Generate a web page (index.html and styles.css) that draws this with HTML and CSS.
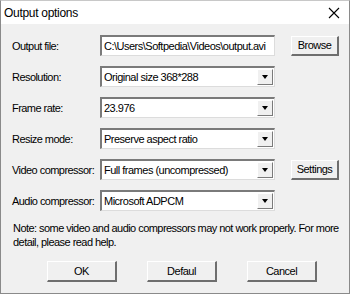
FILE: index.html
```html
<!DOCTYPE html>
<html lang="en">
<head>
    <meta charset="UTF-8">
    <title>Output options</title>
    <link rel="stylesheet" href="styles.css">
</head>
<body>

<div class="window">
    <div class="titlebar">
        <span class="title">Output options</span>
        <svg class="close" width="12" height="12" viewBox="0 0 12 12">
            <path d="M1 1 L11 11 M11 1 L1 11" stroke="#000" stroke-width="1.1" fill="none"/>
        </svg>
    </div>

    <div class="content">
        <div class="form-grid">
            <div class="label">Output file:</div>
            <div class="textbox">C:\Users\Softpedia\Videos\output.avi</div>
            <div class="btn side-btn">Browse</div>

            <div class="label">Resolution:</div>
            <div class="combo"><span class="value">Original size 368*288</span><span class="arrow"></span></div>
            <div></div>

            <div class="label">Frame rate:</div>
            <div class="combo"><span class="value">23.976</span><span class="arrow"></span></div>
            <div></div>

            <div class="label">Resize mode:</div>
            <div class="combo"><span class="value">Preserve aspect ratio</span><span class="arrow"></span></div>
            <div></div>

            <div class="label">Video compressor:</div>
            <div class="combo"><span class="value">Full frames (uncompressed)</span><span class="arrow"></span></div>
            <div class="btn side-btn">Settings</div>

            <div class="label">Audio compressor:</div>
            <div class="combo"><span class="value">Microsoft ADPCM</span><span class="arrow"></span></div>
            <div></div>
        </div>

        <p class="note">Note: some video and audio compressors may not work properly. For more detail, please read help.</p>

        <div class="actions">
            <div class="btn action-btn">OK</div>
            <div class="btn action-btn">Defaul</div>
            <div class="btn action-btn">Cancel</div>
        </div>
    </div>
</div>

</body>
</html>
```

FILE: styles.css
```css
body {
    margin: 0;
    background: #f0f0f0;
    font-family: "Liberation Sans", Arial, sans-serif;
    font-size: 11px;
    color: #000;
}
.window {
    width: 350px;
    height: 294px;
    box-sizing: border-box;
    border: 1px solid #8a8a8a;
    border-top-color: #c8c8c8;
    background: #f0f0f0;
    display: flex;
    flex-direction: column;
}
.titlebar {
    height: 23px;
    background: #fff;
    display: flex;
    align-items: center;
    justify-content: space-between;
    padding: 0 9px 0 3px;
    flex-shrink: 0;
}
.title {
    font-size: 12px;
    letter-spacing: -0.3px;
}
.content {
    padding: 11px 0 0 11px;
}
.form-grid {
    display: grid;
    grid-template-columns: 88px 175px 48px;
    grid-auto-rows: 21px;
    row-gap: 10px;
    column-gap: 0;
    align-items: center;
}
.label {
    letter-spacing: -0.55px;
}
.textbox, .combo {
    height: 21px;
    box-sizing: border-box;
    background: #fff;
    border-top: 2px solid #7a7a7a;
    border-left: 2px solid #7a7a7a;
    border-right: 1px solid #dcdcdc;
    border-bottom: 1px solid #dcdcdc;
    display: flex;
    align-items: center;
    white-space: nowrap;
    overflow: hidden;
    letter-spacing: -0.5px;
}
.textbox {
    padding-left: 2px;
}
.combo .value {
    flex: 1;
    padding-left: 2px;
}
.arrow {
    width: 16px;
    height: 16px;
    margin-right: 1px;
    box-sizing: border-box;
    background: #f0f0f0;
    border-top: 1px solid #fff;
    border-left: 1px solid #fff;
    border-right: 1px solid #7a7a7a;
    border-bottom: 1px solid #7a7a7a;
    display: flex;
    align-items: center;
    justify-content: center;
}
.arrow::after {
    content: "";
    border-left: 3.5px solid transparent;
    border-right: 3.5px solid transparent;
    border-top: 4px solid #000;
}
.btn {
    box-sizing: border-box;
    background: #f0f0f0;
    border-top: 1px solid #fff;
    border-left: 1px solid #fff;
    border-right: 2px solid #6e6e6e;
    border-bottom: 2px solid #6e6e6e;
    display: flex;
    align-items: center;
    justify-content: center;
    letter-spacing: -0.5px;
}
.side-btn {
    margin-left: 16px;
    width: 48px;
    height: 20px;
}
.note {
    margin: 10px 0 0 1px;
    line-height: 14px;
    letter-spacing: -0.55px;
    padding-right: 2px;
}
.actions {
    display: flex;
    gap: 30px;
    margin: 12px 0 0 35px;
}
.action-btn {
    width: 70px;
    height: 21px;
}
```
